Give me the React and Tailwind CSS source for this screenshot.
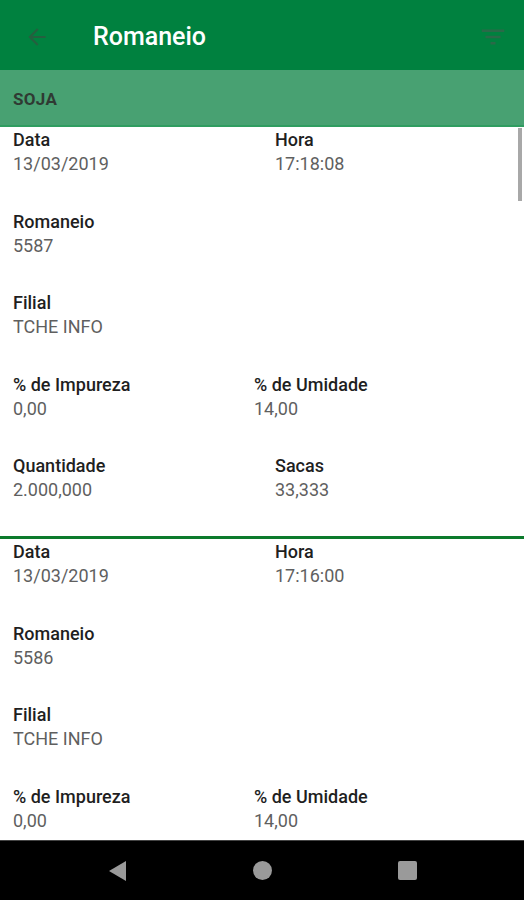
import React from "react";

function Field({ label, value, className = "" }) {
  return (
    <div className={className}>
      <div className="text-[18px] leading-[24px] font-medium text-[#1f1f1f]">{label}</div>
      <div className="text-[18px] leading-[24px] text-[#5f5f5f]">{value}</div>
    </div>
  );
}

function Row({ children, last }) {
  return <div className={`flex ${last ? "" : "mb-[33.5px]"}`}>{children}</div>;
}

function Card({ data, hora, rom, full }) {
  return (
    <div className="px-[13px] pt-[1px]">
      <Row>
        <Field label="Data" value={data} className="w-[262px]" />
        <Field label="Hora" value={hora} />
      </Row>
      <Row>
        <Field label="Romaneio" value={rom} />
      </Row>
      <Row>
        <Field label="Filial" value="TCHE INFO" />
      </Row>
      <Row last={!full}>
        <Field label="% de Impureza" value="0,00" className="w-[241px]" />
        <Field label="% de Umidade" value="14,00" />
      </Row>
      {full && (
        <Row last>
          <Field label="Quantidade" value="2.000,000" className="w-[262px]" />
          <Field label="Sacas" value="33,333" />
        </Row>
      )}
    </div>
  );
}

export default function App() {
  return (
    <div className="w-[524px] h-[900px] flex flex-col bg-white overflow-hidden" style={{ fontFamily: "Roboto, 'Noto Sans', sans-serif" }}>
      <div className="h-[70px] bg-[#00813f] flex items-center shrink-0 pt-[3px]">
        <svg width="26" height="26" viewBox="0 0 24 24" className="ml-[24px]">
          <path d="M20 11H7.83l5.59-5.59L12 4l-8 8 8 8 1.41-1.41L7.83 13H20v-2z" fill="#24603f" />
        </svg>
        <div className="ml-[43px] text-white text-[25px] font-medium leading-none">Romaneio</div>
        <div className="flex-1" />
        <svg width="30" height="30" viewBox="0 0 24 24" className="mr-[16px]">
          <path d="M10 18h4v-2h-4v2zM3 6v2h18V6H3zm3 7h12v-2H6v2z" fill="#2a6a48" />
        </svg>
      </div>
      <div className="h-[57px] bg-[#48a172] border-b-2 border-[#2f9d60] flex items-center px-[13px] shrink-0 pt-[4px]">
        <span className="text-[17px] font-bold text-[#2f3a33] tracking-[0.3px]">SOJA</span>
      </div>
      <div className="relative flex-1 overflow-hidden">
        <div className="absolute right-[2px] top-[1px] w-[4px] h-[73px] bg-[#a8a8a8]" />
        <Card data="13/03/2019" hora="17:18:08" rom="5587" full />
        <div className="h-[3px] bg-[#0c7a2c] mt-[34px]" />
        <Card data="13/03/2019" hora="17:16:00" rom="5586" />
      </div>
      <div className="h-[60px] bg-black flex items-center justify-center gap-[126px] shrink-0 border-t border-[#444]">
        <svg width="19" height="22" viewBox="0 0 19 22">
          <path d="M18 1 L1 11 L18 21 Z" fill="#9a9a9a" />
        </svg>
        <div className="w-[19px] h-[19px] rounded-full bg-[#9a9a9a]" />
        <div className="w-[19px] h-[19px] rounded-[2px] bg-[#9a9a9a]" />
      </div>
    </div>
  );
}
